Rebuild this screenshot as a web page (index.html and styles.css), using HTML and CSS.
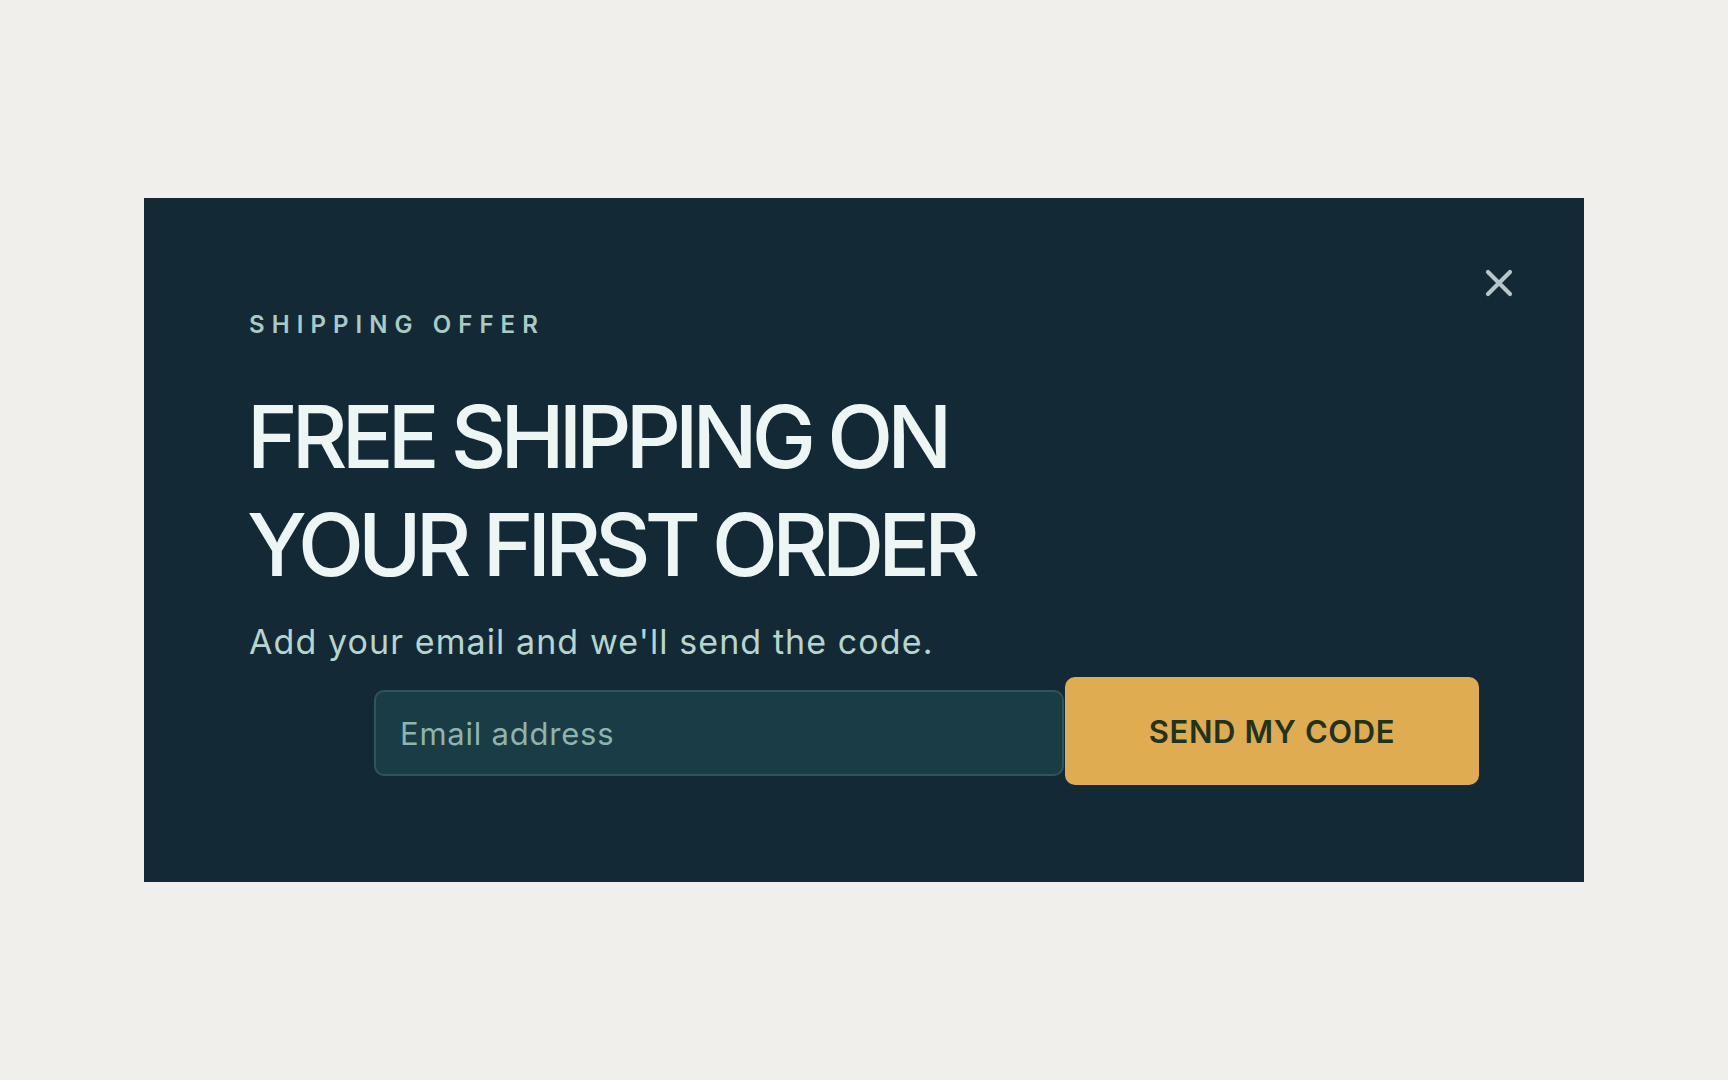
FILE: index.html
```html
<!DOCTYPE html>
<html lang="en">
<head>
    <meta charset="UTF-8">
    <meta name="viewport" content="width=device-width, initial-scale=1.0">
    <title>Free Shipping</title>
    <link rel="stylesheet" href="styles.css">
</head>
<body>
    <div class="offer">
        <button class="close" aria-label="Close">
            <svg width="28" height="28" viewBox="0 0 28 28">
                <path d="M3 3 L25 25 M25 3 L3 25" stroke="currentColor" stroke-width="4.2" stroke-linecap="round" fill="none"/>
            </svg>
        </button>

        <div class="eyebrow">SHIPPING OFFER</div>
        <h1 class="title">FREE SHIPPING ON<br>YOUR FIRST ORDER</h1>
        <p class="lead">Add your email and we'll send the code.</p>

        <form class="signup" onsubmit="return false">
            <input class="email" type="email" placeholder="Email address">
            <button class="send" type="submit">SEND MY CODE</button>
        </form>
    </div>
</body>
</html>
```

FILE: styles.css
```css
body {
    margin: 0;
    min-height: 100vh;
    display: flex;
    justify-content: center;
    align-items: center;
    background-color: #f0efeb;
    font-family: Inter, "Noto Sans", sans-serif;
}
.offer {
    position: relative;
    box-sizing: border-box;
    width: 1440px;
    padding: 112px 105px 97px;
    background-color: #132a36;
}
.close {
    position: absolute;
    top: 71px;
    right: 71px;
    width: 28px;
    height: 28px;
    padding: 0;
    border: none;
    background: none;
    color: #b6c6ca;
    cursor: pointer;
}
.close svg {
    display: block;
}
.eyebrow {
    font-size: 24px;
    line-height: 30px;
    font-weight: 600;
    letter-spacing: 0.295em;
    color: #a9cbc4;
}
.title {
    margin: 43px 0 0 -2px;
    font-size: 86px;
    line-height: 108px;
    font-weight: 500;
    letter-spacing: -0.068em;
    color: #eef6f3;
}
.lead {
    margin: 23px 0 0;
    font-size: 34px;
    line-height: 40px;
    letter-spacing: 0.032em;
    color: #b7d5ce;
}
.signup {
    display: flex;
    justify-content: flex-end;
    align-items: center;
    gap: 1px;
    margin-top: 15px;
}
.email {
    box-sizing: border-box;
    width: 690px;
    height: 86px;
    margin-top: 4px;
    padding: 0 24px;
    border: 2px solid #2d555d;
    border-radius: 10px;
    background-color: #1a3c46;
    font-family: inherit;
    font-size: 31px;
    letter-spacing: 0.025em;
    color: #d8ebe6;
    outline: none;
}
.email::placeholder {
    color: #8fb4ad;
}
.send {
    width: 414px;
    height: 108px;
    border: none;
    border-radius: 10px;
    background-color: #e0ac52;
    font-family: inherit;
    font-size: 31px;
    font-weight: 600;
    letter-spacing: 0.02em;
    color: #1e3421;
    cursor: pointer;
}
```
